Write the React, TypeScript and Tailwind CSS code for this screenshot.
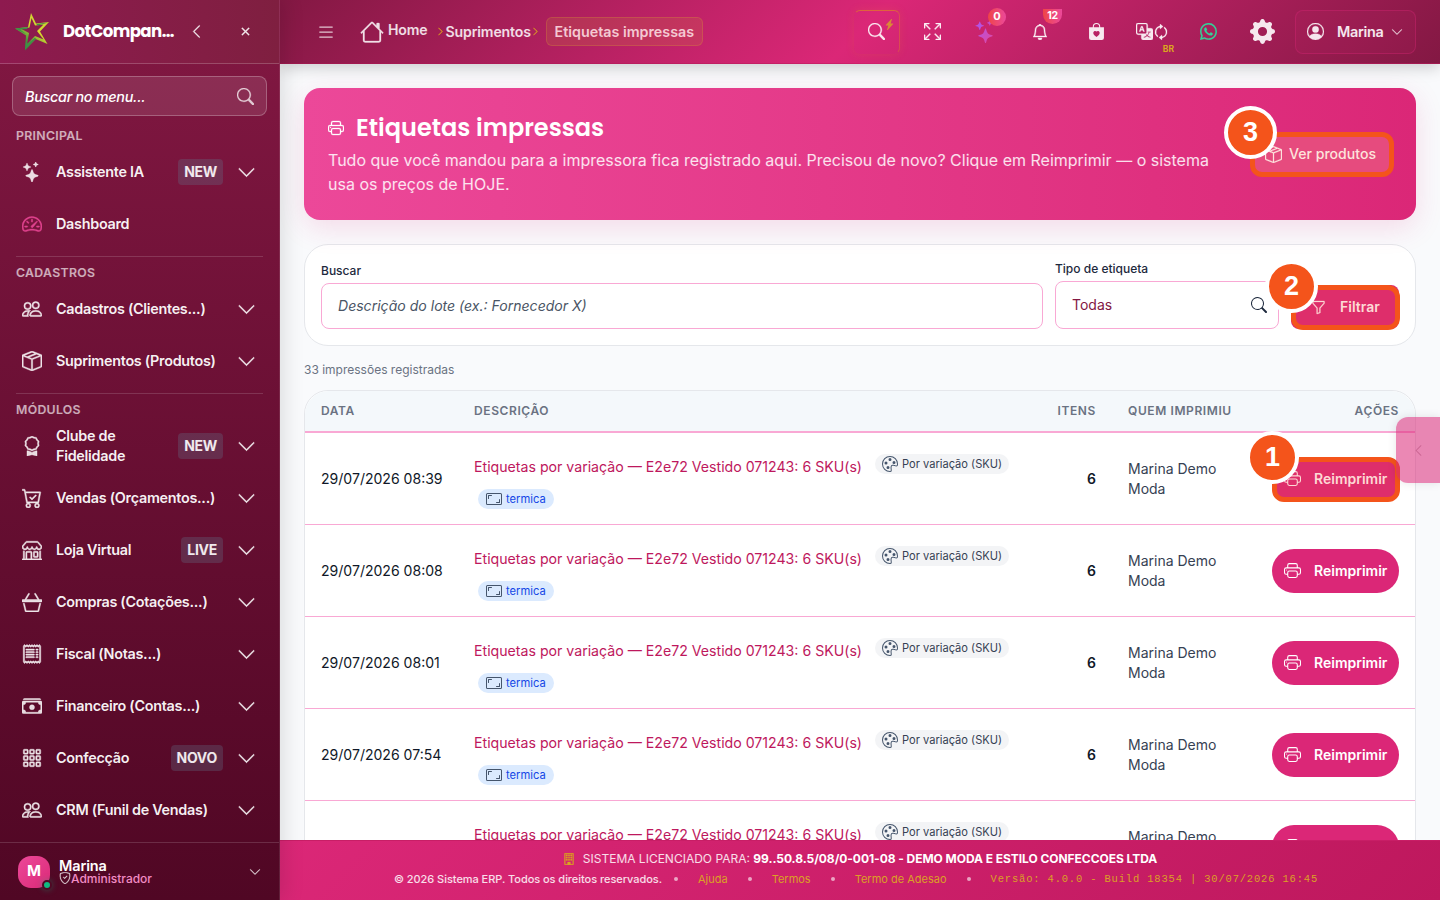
import type { ReactNode } from 'react';
import type { IconType } from 'react-icons';
import {
    BsArrowRepeat, BsArrowsFullscreen, BsAspectRatio, BsAward, BsBagHeartFill, BsBasket3, BsBell, BsBoxSeam,
    BsBuilding, BsCartCheck, BsCashStack, BsChevronDown, BsChevronLeft, BsChevronRight, BsFunnel, BsGearFill,
    BsGrid3X3Gap, BsHouse, BsLightningChargeFill, BsList, BsPalette, BsPeople, BsPersonCircle, BsPrinter,
    BsReceipt, BsSearch, BsShieldCheck, BsShop, BsSpeedometer2, BsStars, BsTranslate, BsWhatsapp, BsX,
} from 'react-icons/bs';

interface MenuItem {
    label: string;
    icon: IconType;
    badge?: string;
    leaf?: boolean;
    narrow?: boolean;
}

interface MenuSection {
    title: string;
    items: MenuItem[];
}

const sections: MenuSection[] = [
    {
        title: 'Principal',
        items: [
            { label: 'Assistente IA', icon: BsStars, badge: 'NEW' },
            { label: 'Dashboard', icon: BsSpeedometer2, leaf: true },
        ],
    },
    {
        title: 'Cadastros',
        items: [
            { label: 'Cadastros (Clientes...)', icon: BsPeople },
            { label: 'Suprimentos (Produtos)', icon: BsBoxSeam },
        ],
    },
    {
        title: 'Módulos',
        items: [
            { label: 'Clube de Fidelidade', icon: BsAward, badge: 'NEW', narrow: true },
            { label: 'Vendas (Orçamentos...)', icon: BsCartCheck },
            { label: 'Loja Virtual', icon: BsShop, badge: 'LIVE' },
            { label: 'Compras (Cotações...)', icon: BsBasket3 },
            { label: 'Fiscal (Notas...)', icon: BsReceipt },
            { label: 'Financeiro (Contas...)', icon: BsCashStack },
            { label: 'Confecção', icon: BsGrid3X3Gap, badge: 'NOVO' },
            { label: 'CRM (Funil de Vendas)', icon: BsPeople },
        ],
    },
];

const rows = ['29/07/2026 08:39', '29/07/2026 08:08', '29/07/2026 08:01', '29/07/2026 07:54', '29/07/2026 07:48'];

function StarLogo() {
    return (
        <svg viewBox="0 0 40 40" className="h-10 w-10 shrink-0">
            <defs>
                <linearGradient id="star" x1="0.8" y1="0.1" x2="0.2" y2="0.9">
                    <stop offset="0" stopColor="#c9d234" />
                    <stop offset="0.4" stopColor="#d8d92c" />
                    <stop offset="0.75" stopColor="#4f9a3d" />
                    <stop offset="1" stopColor="#2f8a3c" />
                </linearGradient>
            </defs>
            <path
                fill="url(#star)"
                fillRule="evenodd"
                d="M19 1l5 10.500 13-1.500-9 9.500 7.500 12.500-12-5-10.500 11.500 1-15-11-7 13-1.500zM19.500 6l-2 9.500-8 1.500 7.500 4-2 11 8-8 8.500 3.500-6.500-8.500 6.500-6.500-8.500 1z"
            />
            <path fill="#3f8f45" d="M3 16.500l13-1.500-1 2-7 .5 6 4.500zM13 37.500l1-9 2 3.500 7-6.500 1 1.500zM24 12l12-1.500-10 3z" />
        </svg>
    );
}

function SidebarItem({ item }: { item: MenuItem }) {
    const Icon = item.icon;
    return (
        <div className="flex h-[52px] items-center pr-[23px] pl-[22px]">
            <Icon size={20} strokeWidth={0.35} className={item.leaf ? 'shrink-0 text-[#e0438f]' : 'shrink-0 text-white/85'} />
            <span className={`ml-3.5 text-[14.400px] leading-5 font-semibold tracking-[-0.02em] text-white/95 ${item.narrow ? 'w-[90px]' : 'whitespace-nowrap'}`}>
                {item.label}
            </span>
            <div className="ml-auto flex items-center gap-3.5">
                {item.badge && (
                    <span className="flex h-[26px] items-center rounded bg-[#64748b]/30 px-1.5 text-sm font-bold tracking-[-0.02em] text-white/90">
                        {item.badge}
                    </span>
                )}
                {!item.leaf && <BsChevronDown size={19} strokeWidth={0.35} className="text-white/90" />}
            </div>
        </div>
    );
}

function Sidebar() {
    return (
        <aside className="relative z-20 flex h-full w-[280px] shrink-0 flex-col border-r border-white/10 bg-linear-to-b from-[#831843] to-[#500724] shadow-[4px_0_20px_rgba(0,0,0,0.12)]">
            <div className="flex h-16 shrink-0 items-center border-b border-white/20 bg-linear-to-r from-[#8e1a4f] to-[#7f1f40] pl-3">
                <StarLogo />
                <span className="mt-0.5 ml-[11px] w-[113px] font-[Poppins,Inter,sans-serif] text-[16.600px] font-bold tracking-[-0.035em] whitespace-nowrap text-white">
                    DotCompan...
                </span>
                <BsChevronLeft size={15} strokeWidth={0.4} className="ml-[13px] text-white/90" />
                <BsX size={17} strokeWidth={0.4} className="ml-[33px] text-white/90" />
            </div>

            <div className="mx-3 mt-3 flex h-10 shrink-0 items-center justify-between rounded-lg border border-white/25 bg-white/10 pr-3 pl-3">
                <span className="mt-px text-[14.400px] font-medium tracking-[-0.02em] text-white italic">Buscar no menu...</span>
                <BsSearch size={17} strokeWidth={0.3} className="text-white/75" />
            </div>

            <nav className="mt-2.5 min-h-0 flex-1 overflow-hidden">
                {sections.map((section, i) => (
                    <div key={section.title} className={i > 0 ? 'mt-1.5' : ''}>
                        {i > 0 && <div className="mx-4 mb-1.5 border-t border-white/15" />}
                        <h3 className="flex h-5 items-center px-4 text-[12.300px] font-semibold tracking-[0.025em] text-white/65 uppercase">
                            {section.title}
                        </h3>
                        {section.items.map(item => <SidebarItem key={item.label} item={item} />)}
                    </div>
                ))}
            </nav>

            <div className="flex h-[58px] shrink-0 items-center border-t border-white/15 pr-[18px] pl-[18px]">
                <div className="relative flex h-8 w-8 items-center justify-center rounded-[13px] bg-linear-to-br from-[#ec4899] to-[#db2777] text-[15px] font-bold text-white">
                    M
                    <span className="absolute -right-0.5 -bottom-0.5 h-2.5 w-2.5 rounded-full border-2 border-[#500724] bg-[#10b981] shadow-[0_0_6px_rgba(16,185,129,0.4)]" />
                </div>
                <div className="ml-[9px]">
                    <div className="text-[14.500px] leading-[13px] font-semibold tracking-[-0.01em] text-white">Marina</div>
                    <div className="flex items-center text-xs leading-[13px] font-medium text-[#f28cc4]">
                        <BsShieldCheck size={12} strokeWidth={0.3} className="text-white/80" />
                        Administrador
                    </div>
                </div>
                <BsChevronDown size={12} strokeWidth={0.4} className="ml-auto text-white/80" />
            </div>
        </aside>
    );
}

function HeaderButton({ children, className = '' }: { children: ReactNode; className?: string }) {
    return <div className={`relative flex h-11 w-14 items-center justify-center text-white/90 ${className}`}>{children}</div>;
}

function SparkleIcon() {
    return (
        <>
            <svg className="absolute h-0 w-0">
                <defs>
                    <linearGradient id="sparkle" x1="0" y1="0" x2="1" y2="1">
                        <stop offset="0" stopColor="#a855f7" />
                        <stop offset="1" stopColor="#e0489f" />
                    </linearGradient>
                </defs>
            </svg>
            <BsStars size={23} fill="url(#sparkle)" className="mr-[6px]" />
        </>
    );
}

function Header() {
    return (
        <header className="relative z-10 flex h-16 shrink-0 items-center border-b border-[#be185d]/40 bg-[linear-gradient(135deg,#831843_0%,#db2777_50%,#831843_100%)] pr-6 pl-9 shadow-[0_4px_14px_rgba(0,0,0,0.18)]">
            <BsList size={20} className="text-white/75" />
            <div className="ml-[24px] flex items-center text-[14.100px] font-semibold tracking-[-0.01em] text-white/85">
                <BsHouse size={24} strokeWidth={0.2} />
                <span className="mb-[3px] ml-1">Home</span>
                <BsChevronRight size={9} strokeWidth={0.8} className="mr-px ml-[8px] text-[#d99a24]" />
                <span>Suprimentos</span>
                <BsChevronRight size={9} strokeWidth={0.8} className="mr-[6px] text-[#d99a24]" />
                <span className="flex h-[29px] w-[157px] items-center justify-center rounded-md border border-[#d69e2e]/25 bg-[#d69e2e]/15 text-[14.300px] tracking-[0] whitespace-nowrap text-[#f4c9d2]">
                    Etiquetas impressas
                </span>
            </div>
            <div className="ml-auto flex items-center">
                <HeaderButton>
                    <div className="absolute inset-y-0 right-[4px] left-[6px] rounded-md border border-transparent border-t-[#e0742f]/80 border-r-[#e0742f]/50 shadow-[0_0_8px_rgba(224,116,47,0.2)]" />
                    <BsSearch size={17} strokeWidth={0.3} />
                    <BsLightningChargeFill size={11} className="absolute top-[9px] right-[9px] text-[#d98a35]" />
                </HeaderButton>
                <HeaderButton><BsArrowsFullscreen size={17} strokeWidth={0.4} /></HeaderButton>
                <HeaderButton className="-mr-1">
                    <SparkleIcon />
                    <span className="absolute -top-[2px] right-[10px] flex h-[18px] w-[18px] items-center justify-center rounded-full bg-linear-to-r from-[#ef4444] to-[#ec4899] text-[11px] font-bold text-white">0</span>
                </HeaderButton>
                <HeaderButton>
                    <BsBell size={16} strokeWidth={0.4} />
                    <span className="absolute -top-px right-[6px] flex h-[15px] w-[19px] items-center justify-center rounded-t rounded-b-full bg-linear-to-r from-[#ef4444] to-[#ec4899] text-[10.500px] font-bold tracking-[-0.04em] text-white">12</span>
                </HeaderButton>
                <HeaderButton><BsBagHeartFill size={17} /></HeaderButton>
                <HeaderButton>
                    <BsTranslate size={17} strokeWidth={0.3} />
                    <BsArrowRepeat size={16} strokeWidth={0.4} className="rotate-90" />
                    <span className="absolute right-[6px] -bottom-px text-[8.500px] leading-3 font-bold text-[#dba520]">BR</span>
                </HeaderButton>
                <HeaderButton><BsWhatsapp size={17} strokeWidth={0.2} className="text-[#34d399]" /></HeaderButton>
                <HeaderButton className="pr-1"><BsGearFill size={25} /></HeaderButton>
                <div className="ml-[3px] flex h-11 w-[121px] items-center rounded-lg border border-[#db2777]/35 bg-[#db2777]/10 pl-[11px] text-white/90">
                    <BsPersonCircle size={17} strokeWidth={0.3} />
                    <span className="ml-[13px] text-[14.400px] font-semibold tracking-[-0.02em]">Marina</span>
                    <BsChevronDown size={12} strokeWidth={0.4} className="ml-[7px] text-white/75" />
                </div>
            </div>
        </header>
    );
}

function StepCircle({ n, className }: { n: number; className: string }) {
    return (
        <div className={`absolute z-10 flex h-[53px] w-[53px] items-center justify-center rounded-full border-4 border-white bg-[#f4541b] font-['Liberation_Sans',sans-serif] text-[27px] font-bold text-white ${className}`}>
            {n}
        </div>
    );
}

function Hero() {
    return (
        <section className="relative flex h-[132px] items-center rounded-2xl bg-linear-to-r from-[#ec4899] to-[#db2777] pr-6 pb-0.5 pl-6 shadow-[0_8px_28px_rgba(219,39,119,0.15)]">
            <div className="w-[900px] text-white">
                <h1 className="flex h-9 items-center font-[Poppins,Inter,sans-serif] text-2xl font-semibold">
                    <BsPrinter size={16} strokeWidth={0.3} className="mr-3" />
                    Etiquetas impressas
                </h1>
                <p className="mt-0.5 text-base leading-6 text-white/85">
                    Tudo que você mandou para a impressora fica registrado aqui. Precisou de novo? Clique em Reimprimir — o sistema
                    <br />
                    usa os preços de HOJE.
                </p>
            </div>
            <div className="absolute top-[44px] right-[22px] flex h-[45px] w-[144px] items-center rounded-xl border-[5px] border-[#f4541b] bg-[#e64b7e] pb-px pl-2.5 text-[14.100px] font-medium text-[#fde3dc]">
                <BsBoxSeam size={17} strokeWidth={0.2} className="mr-[7px]" />
                Ver produtos
                <StepCircle n={3} className="-top-[31px] -left-[31px]" />
            </div>
        </section>
    );
}

function Filters() {
    return (
        <section className="mt-6 flex h-[102px] items-end rounded-3xl border border-gray-200 bg-white px-4 pb-4">
            <label className="w-[722px]">
                <span className="mb-[2px] block text-xs leading-5 font-medium text-slate-800">Buscar</span>
                <div className="flex h-[46px] items-center rounded-lg border border-[#f9a8d4] px-4 text-[14.050px] text-gray-600 italic">
                    Descrição do lote (ex.: Fornecedor X)
                </div>
            </label>
            <label className="ml-3 w-[224px]">
                <span className="mb-[2px] block text-xs leading-5 font-medium text-slate-800">Tipo de etiqueta</span>
                <div className="flex h-12 items-center justify-between rounded-lg border border-[#f9a8d4] pr-[11px] pl-4 text-sm text-[#831843]">
                    Todas
                    <BsSearch size={16} className="text-slate-800" />
                </div>
            </label>
            <div className="relative ml-3 h-11 w-[108px] rounded-lg bg-[#db2777]">
                <div className="absolute top-0 -right-px -bottom-px left-0 flex items-center rounded-xl border-[5px] border-[#f4541b] bg-[#de2e6b] pb-px pl-[15px] text-sm font-semibold text-[#fdd9d5]">
                    <BsFunnel size={15} strokeWidth={0.3} className="mr-3.5" />
                    Filtrar
                </div>
                <StepCircle n={2} className="-top-[25px] -left-[26px]" />
            </div>
        </section>
    );
}

const cols = 'grid grid-cols-[153px_583px_71px_144px_159px]';

function PrintRow({ date, highlighted }: { date: string; highlighted: boolean }) {
    return (
        <div className={`${cols} h-[92px] items-center border-b border-[#f9a8d4]`}>
            <div className="px-4 text-[14.050px] whitespace-nowrap text-gray-900">{date}</div>
            <div className="px-4 pt-[3px]">
                <div className="flex items-center">
                    <span className="mt-[5px] text-[14.150px] leading-5 text-[#be185d]">Etiquetas por variação — E2e72 Vestido 071243: 6 SKU(s)</span>
                    <span className="ml-[13px] flex h-5 items-center rounded-full bg-gray-100 px-[7px] text-[11.100px] text-gray-700">
                        <BsPalette size={16} className="mr-1 text-slate-600" />
                        Por variação (SKU)
                    </span>
                </div>
                <span className="mt-[12px] ml-1 flex h-5 w-fit items-center rounded-full bg-blue-100 px-2 pt-px text-[11.200px] text-blue-700">
                    <BsAspectRatio size={16} className="mr-1 text-slate-600" />
                    termica
                </span>
            </div>
            <div className="px-4 text-right text-sm font-semibold text-gray-900">6</div>
            <div className="px-4 text-sm leading-5 text-gray-700">Marina Demo<br />Moda</div>
            <div className="relative ml-4 h-11 w-[127px]">
                {highlighted ? (
                    <>
                        <div className="absolute inset-0 -right-px -bottom-px flex items-center rounded-xl border-[5px] border-[#f4541b] bg-[#de2e6b] pb-px pl-[7px] text-sm font-semibold text-[#fdd9d5]">
                            <BsPrinter size={17} className="mr-[13px]" />
                            Reimprimir
                        </div>
                        <StepCircle n={1} className="-top-[26px] -left-[26px]" />
                    </>
                ) : (
                    <button className="flex h-11 w-full items-center rounded-full bg-[#db2777] pl-3 text-sm font-semibold text-white">
                        <BsPrinter size={17} className="mr-[13px]" />
                        Reimprimir
                    </button>
                )}
            </div>
        </div>
    );
}

function PrintTable() {
    return (
        <section className="mt-2.5 h-[560px] rounded-t-3xl border border-gray-200 bg-white">
            <div className={`${cols} h-[42px] items-center rounded-t-3xl border-b-2 border-[#f9a8d4] bg-[#f4f8fb] text-xs font-semibold tracking-[0.05em] text-gray-500 uppercase`}>
                <span className="px-4">Data</span>
                <span className="px-4">Descrição</span>
                <span className="px-4 text-right">Itens</span>
                <span className="px-4">Quem imprimiu</span>
                <span className="px-4 text-right">Ações</span>
            </div>
            {rows.map((date, i) => <PrintRow key={date} date={date} highlighted={i === 0} />)}
        </section>
    );
}

function Dot() {
    return <span className="h-1 w-1 rounded-full bg-white/60" />;
}

function Footer() {
    return (
        <footer className="relative z-10 flex h-[60px] shrink-0 flex-col items-center border-t border-[#c81e66] bg-[linear-gradient(135deg,#db2777,#be185d)] pt-2 pr-2 text-white/85">
            <div className="flex h-5 items-center pl-[8px] text-xs">
                <BsBuilding size={12} strokeWidth={0.4} className="mr-2 text-[#d9a520]" />
                <span>SISTEMA LICENCIADO PARA: <b className="font-bold tracking-[-0.004em] text-white">99..50.8.5/08/0-001-08 - DEMO MODA E ESTILO CONFECCOES LTDA</b></span>
            </div>
            <div className="flex h-5 items-center text-[11px] text-[#dba026]">
                <span className="font-medium tracking-[-0.004em] text-white/85">© 2026 Sistema ERP. Todos os direitos reservados.</span>
                <span className="mr-[20px] ml-[12px] flex"><Dot /></span>
                <span>Ajuda</span>
                <span className="mx-5 flex"><Dot /></span>
                <span>Termos</span>
                <span className="mx-5 flex"><Dot /></span>
                <span>Termo de Adesao</span>
                <span className="mx-5 flex"><Dot /></span>
                <span className="mt-0.5 font-['Liberation_Mono',monospace] text-[10.500px] tracking-[0.078em]">Versão: 4.0.0 - Build 18354 | 30/07/2026 16:45</span>
            </div>
        </footer>
    );
}

export default function App() {
    return (
        <div className="relative flex h-[900px] w-[1440px] overflow-hidden bg-[#f9fafc] font-[Inter,sans-serif]">
            <Sidebar />
            <div className="flex min-w-0 flex-1 flex-col">
                <Header />
                <main className="min-h-0 flex-1 overflow-hidden px-6 pt-6">
                    <Hero />
                    <Filters />
                    <p className="mt-[14px] text-xs leading-5 text-gray-500">33 impressões registradas</p>
                    <PrintTable />
                </main>
                <Footer />
            </div>
            {/* Side drawer handle */}
            <div className="absolute top-[417px] right-0 z-20 flex h-[66px] w-11 items-center justify-center rounded-l-xl bg-[#db2777]/55 text-[#831843]/30 shadow-[0_0_10px_rgba(0,0,0,0.1)]">
                <BsChevronLeft size={13} />
            </div>
        </div>
    );
}
